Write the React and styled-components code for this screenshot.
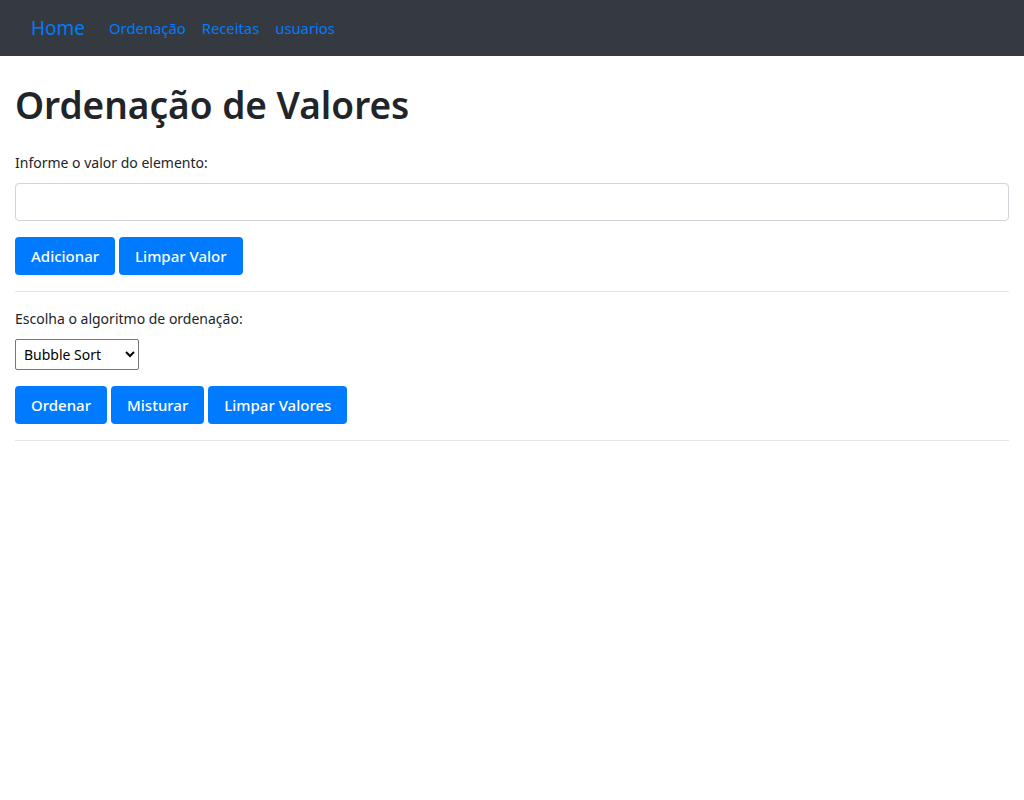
import React from "react";
import styled, { createGlobalStyle } from "styled-components";

const Global = createGlobalStyle`
  * { box-sizing: border-box; }
  body {
    margin: 0;
    font-family: "Noto Sans", "Open Sans", sans-serif;
    color: #212529;
    background: #fff;
  }
`;

const NavBar = styled.nav`
  height: 56px;
  background: #343a40;
  display: flex;
  align-items: center;
  padding: 0 31px;
`;

const Brand = styled.a`
  color: #007bff;
  font-size: 19px;
  margin-right: 16px;
  text-decoration: none;
`;

const NavLink = styled.a`
  color: #007bff;
  font-size: 14.8px;
  padding: 0 8px;
  text-decoration: none;
`;

const Main = styled.main`
  padding: 25px 15px 0;
`;

const Title = styled.h1`
  margin: 0 0 23px;
  font-size: 37px;
  font-weight: 600;
  line-height: 48px;
`;

const Label = styled.label`
  display: block;
  font-size: 14px;
  line-height: 21px;
  margin-bottom: 10px;
`;

const TextInput = styled.input`
  display: block;
  width: 100%;
  height: 38px;
  border: 1px solid #ced4da;
  border-radius: 4px;
  margin-bottom: 16px;
  font: inherit;
`;

const ButtonRow = styled.div`
  display: flex;
  gap: 4px;
`;

const Button = styled.button`
  height: 38px;
  padding: 0 16px;
  background: #007bff;
  color: #fff;
  border: none;
  border-radius: 4px;
  font-family: inherit;
  font-size: 15px;
  font-weight: 500;
  cursor: pointer;
`;

const Divider = styled.hr`
  border: 0;
  border-top: 1px solid rgba(0, 0, 0, 0.1);
  margin: 16px 0;
`;

const Select = styled.select`
  display: block;
  width: 124px;
  height: 31px;
  font-family: inherit;
  font-size: 14px;
  color: #000;
  border: 1px solid #767676;
  border-radius: 2px;
  background: #fff;
  padding: 0 4px;
  margin-bottom: 16px;
`;

export default function App() {
  return (
    <>
      <Global />
      <NavBar>
        <Brand href="#">Home</Brand>
        <NavLink href="#">Ordenação</NavLink>
        <NavLink href="#">Receitas</NavLink>
        <NavLink href="#">usuarios</NavLink>
      </NavBar>
      <Main>
        <Title>Ordenação de Valores</Title>
        <Label>Informe o valor do elemento:</Label>
        <TextInput type="text" />
        <ButtonRow>
          <Button>Adicionar</Button>
          <Button>Limpar Valor</Button>
        </ButtonRow>
        <Divider />
        <Label>Escolha o algoritmo de ordenação:</Label>
        <Select defaultValue="bubble">
          <option value="bubble">Bubble Sort</option>
          <option value="selection">Selection Sort</option>
          <option value="insertion">Insertion Sort</option>
        </Select>
        <ButtonRow>
          <Button>Ordenar</Button>
          <Button>Misturar</Button>
          <Button>Limpar Valores</Button>
        </ButtonRow>
        <Divider />
      </Main>
    </>
  );
}
